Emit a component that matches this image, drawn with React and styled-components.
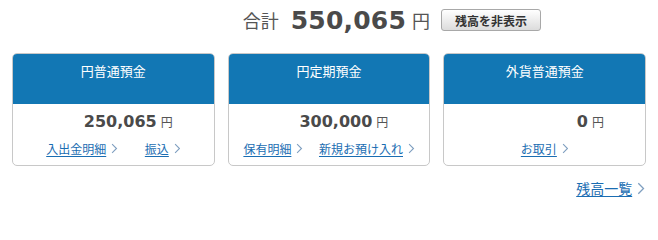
import React from "react";
import styled, { createGlobalStyle } from "styled-components";

const GlobalStyle = createGlobalStyle`
  body {
    margin: 0;
    background: #fff;
    font-family: "DejaVu Sans", "Noto Sans CJK JP", sans-serif;
    color: #444;
  }
`;

const Page = styled.div`
  width: 658px;
  height: 204px;
  box-sizing: border-box;
  padding: 0 12px;
`;

const TotalRow = styled.div`
  display: flex;
  align-items: center;
  justify-content: flex-end;
  height: 40px;
  padding-right: 105px;
`;

const TotalLabel = styled.span`
  font-family: "Noto Sans CJK JP", sans-serif;
  font-size: 18px;
  color: #555;
  margin-right: 12px;
`;

const TotalAmount = styled.span`
  font-size: 25px;
  font-weight: bold;
  color: #4a4a4a;
  letter-spacing: 0.2px;
`;

const Yen = styled.span`
  font-family: "Noto Sans CJK JP", sans-serif;
  font-size: ${(p) => p.size || 12}px;
  color: #555;
  margin-left: ${(p) => p.gap || 4}px;
`;

const HideButton = styled.button`
  margin-left: 11px;
  width: 100px;
  height: 22px;
  padding: 0;
  border: 1px solid #a8a8a8;
  border-radius: 3px;
  background: linear-gradient(#ffffff, #dcdcdc);
  font-family: "Noto Sans CJK JP", sans-serif;
  font-size: 12px;
  font-weight: bold;
  color: #333;
`;

const Cards = styled.div`
  display: grid;
  grid-template-columns: repeat(3, 1fr);
  gap: 13px;
  margin-top: 13px;
`;

const Card = styled.div`
  border: 1px solid #c8c8c8;
  border-radius: 5px;
  overflow: hidden;
  height: 113px;
  box-sizing: border-box;
`;

const CardHeader = styled.div`
  background: #1277b4;
  height: 50px;
  box-sizing: border-box;
  padding-top: 7px;
  text-align: center;
  font-family: "Noto Sans CJK JP", sans-serif;
  font-size: 13px;
  color: #fff;
`;

const AmountLine = styled.div`
  display: flex;
  justify-content: flex-end;
  align-items: baseline;
  padding: 8px 41px 0 0;
  height: 22px;
`;

const Amount = styled.span`
  font-size: 16px;
  font-weight: bold;
  color: #4a4a4a;
`;

const LinkRow = styled.div`
  display: flex;
  justify-content: center;
  gap: ${(p) => p.gap || 16}px;
  margin-top: 6px;
`;

const LinkItem = styled.a`
  display: inline-flex;
  align-items: center;
  font-family: "Noto Sans CJK JP", sans-serif;
  font-size: ${(p) => p.size || 12}px;
  color: #1a6db2;
  text-decoration: none;
  cursor: pointer;
`;

const LinkText = styled.span`
  text-decoration: underline;
  text-underline-offset: 2px;
`;

const Chevron = ({ size = 11 }) => (
  <svg
    width={size * 0.6}
    height={size}
    viewBox="0 0 6 10"
    style={{ marginLeft: 5 }}
  >
    <polyline points="1,1 5,5 1,9" fill="none" stroke="#7f9fc0" strokeWidth="1" />
  </svg>
);

const Footer = styled.div`
  display: flex;
  justify-content: flex-end;
  margin-top: 12px;
  padding-right: 1px;
`;

const Link = ({ children, size, chevron }) => (
  <LinkItem size={size}>
    <LinkText>{children}</LinkText>
    <Chevron size={chevron} />
  </LinkItem>
);

const accounts = [
  { title: "円普通預金", amount: "250,065", links: ["入出金明細", "振込"], gap: 27 },
  { title: "円定期預金", amount: "300,000", links: ["保有明細", "新規お預け入れ"], gap: 16 },
  { title: "外貨普通預金", amount: "0", links: ["お取引"], gap: 16 },
];

export default function App() {
  return (
    <Page>
      <GlobalStyle />
      <TotalRow>
        <TotalLabel>合計</TotalLabel>
        <TotalAmount>550,065</TotalAmount>
        <Yen size={18} gap={6}>円</Yen>
        <HideButton>残高を非表示</HideButton>
      </TotalRow>
      <Cards>
        {accounts.map((a) => (
          <Card key={a.title}>
            <CardHeader>{a.title}</CardHeader>
            <AmountLine>
              <Amount>{a.amount}</Amount>
              <Yen>円</Yen>
            </AmountLine>
            <LinkRow gap={a.gap}>
              {a.links.map((l) => (
                <Link key={l}>{l}</Link>
              ))}
            </LinkRow>
          </Card>
        ))}
      </Cards>
      <Footer>
        <Link size={14} chevron={13}>残高一覧</Link>
      </Footer>
    </Page>
  );
}
